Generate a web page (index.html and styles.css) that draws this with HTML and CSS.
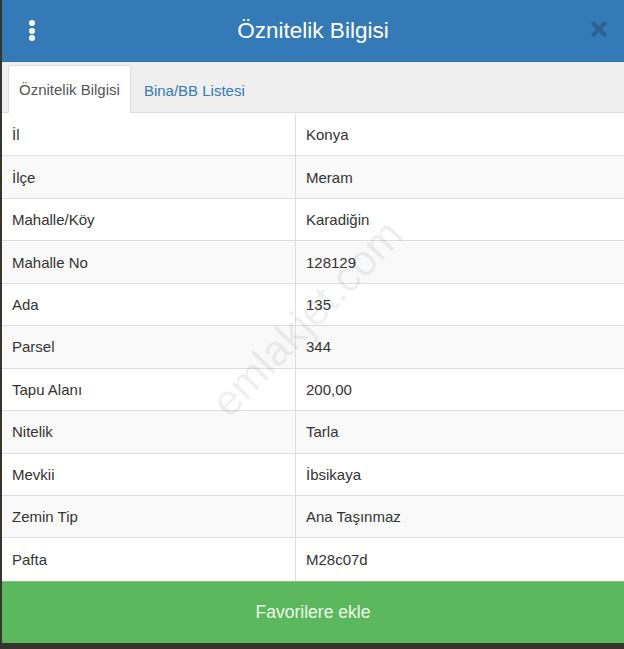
FILE: index.html
```html
<!DOCTYPE html>
<html lang="tr">
<head>
<meta charset="utf-8">
<title>Öznitelik Bilgisi</title>
<link rel="stylesheet" href="styles.css">
</head>
<body>
<div class="panel">
  <header class="panel-head">
    <button class="menu-btn" aria-label="Menü">
      <span class="dot"></span><span class="dot"></span><span class="dot"></span>
    </button>
    <h1 class="panel-title">Öznitelik Bilgisi</h1>
    <button class="close-btn" aria-label="Kapat">
      <svg width="16" height="16" viewBox="0 0 16 16"><path d="M2.5 2.5 L13.5 13.5 M13.5 2.5 L2.5 13.5" stroke="currentColor" stroke-width="4" stroke-linecap="round"/></svg>
    </button>
  </header>

  <nav class="tabs">
    <a class="tab active">Öznitelik Bilgisi</a>
    <a class="tab">Bina/BB Listesi</a>
  </nav>

  <div class="attr-body">
    <div class="attr-table">
      <div class="row"><div class="cell">İl</div><div class="cell value">Konya</div></div>
      <div class="row"><div class="cell">İlçe</div><div class="cell value">Meram</div></div>
      <div class="row"><div class="cell">Mahalle/Köy</div><div class="cell value">Karadiğin</div></div>
      <div class="row"><div class="cell">Mahalle No</div><div class="cell value">128129</div></div>
      <div class="row"><div class="cell">Ada</div><div class="cell value">135</div></div>
      <div class="row"><div class="cell">Parsel</div><div class="cell value">344</div></div>
      <div class="row"><div class="cell">Tapu Alanı</div><div class="cell value">200,00</div></div>
      <div class="row"><div class="cell">Nitelik</div><div class="cell value">Tarla</div></div>
      <div class="row"><div class="cell">Mevkii</div><div class="cell value">İbsikaya</div></div>
      <div class="row"><div class="cell">Zemin Tip</div><div class="cell value">Ana Taşınmaz</div></div>
      <div class="row"><div class="cell">Pafta</div><div class="cell value">M28c07d</div></div>
    </div>
    <div class="watermark">emlakjet.com</div>
  </div>

  <button class="fav-btn">Favorilere ekle</button>
</div>
</body>
</html>
```

FILE: styles.css
```css
html, body {
  margin: 0;
  padding: 0;
}

body {
  background: #34362c;
  font-family: "Liberation Sans", Arial, sans-serif;
  color: #333;
  height: 649px;
  overflow: hidden;
}

.panel {
  margin-left: 2px;
  background: #fff;
  display: flex;
  flex-direction: column;
}

/* blue title bar */
.panel-head {
  height: 61px;
  background: #337ab7;
  border-bottom: 1px solid #2f70a8;
  display: flex;
  align-items: center;
  position: relative;
}

.menu-btn {
  width: 60px;
  height: 61px;
  border: 0;
  background: transparent;
  padding: 0;
  display: flex;
  flex-direction: column;
  align-items: center;
  justify-content: center;
  gap: 1.5px;
}

.dot {
  width: 6px;
  height: 6px;
  border-radius: 50%;
  background: #fff;
}

.panel-title {
  flex: 1;
  margin: 0;
  text-align: center;
  color: #fff;
  font-weight: normal;
  font-size: 22.5px;
}

.close-btn {
  width: 60px;
  height: 61px;
  border: 0;
  background: transparent;
  padding: 0 0 4px 10px;
  color: #2a6194;
  display: flex;
  align-items: center;
  justify-content: center;
}

/* tab strip */
.tabs {
  height: 51px;
  box-sizing: border-box;
  background: #efefef;
  border-bottom: 1px solid #ddd;
  display: flex;
  align-items: flex-end;
  padding-left: 6px;
}

.tab {
  height: 46px;
  margin-bottom: -1px;
  padding: 0 10px;
  margin-right: 2px;
  display: flex;
  align-items: center;
  font-size: 15px;
  color: #337ab7;
  border: 1px solid transparent;
  border-bottom: 0;
  border-radius: 3px 3px 0 0;
}

.tab.active {
  background: #fff;
  color: #555;
  border-color: #ddd;
  height: 47px;
}

/* attribute rows */
.attr-body {
  position: relative;
  overflow: hidden;
  padding-top: 1px;
}

.row {
  display: grid;
  grid-template-columns: 293px 1fr;
  height: 42.45px;
  box-sizing: border-box;
  border-bottom: 1px solid #ddd;
}

.row:nth-child(even) {
  background: #f9f9f9;
}

.row:last-child {
  border-bottom: 0;
}

.cell {
  display: flex;
  align-items: center;
  padding: 0 10px;
  font-size: 15px;
  color: #333;
}

.cell.value {
  border-left: 1px solid #ddd;
}

.watermark {
  position: absolute;
  left: 305px;
  top: 205px;
  transform: translate(-50%, -50%) rotate(-46deg);
  font-size: 43px;
  color: rgba(0, 0, 0, 0.08);
  white-space: nowrap;
  pointer-events: none;
}

/* add-to-favourites footer button */
.fav-btn {
  height: 62px;
  border: 0;
  border-top: 1px solid #7cc77c;
  background: #5cb85c;
  color: #effaea;
  font-family: "Liberation Sans", Arial, sans-serif;
  font-size: 17.5px;
  padding: 0;
  width: 100%;
}
```
